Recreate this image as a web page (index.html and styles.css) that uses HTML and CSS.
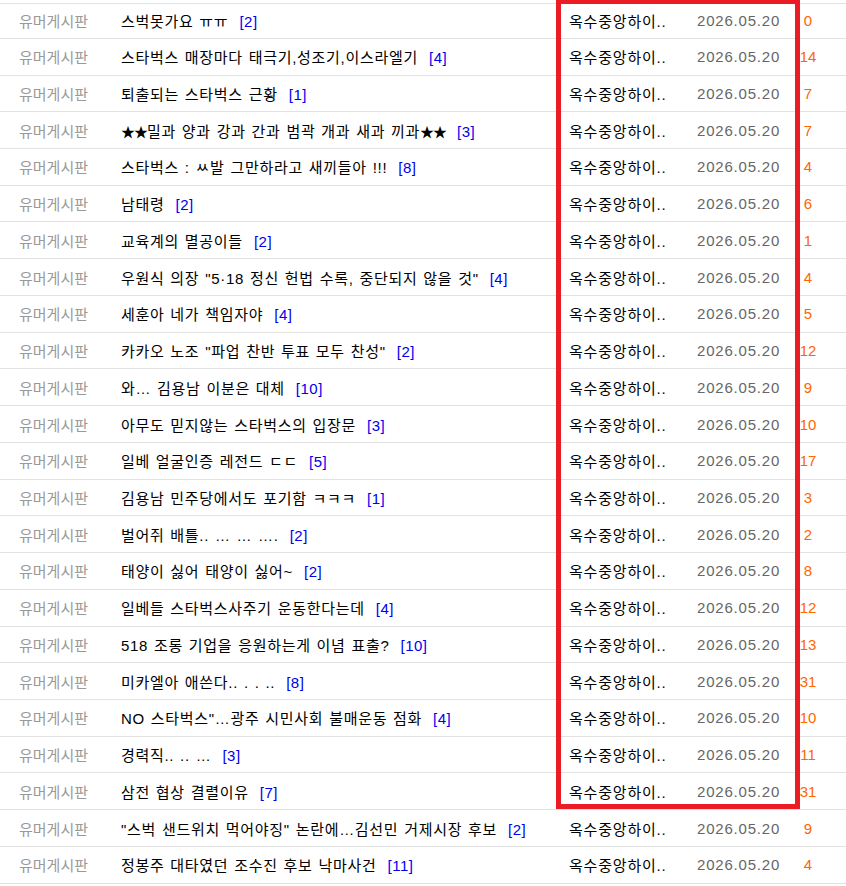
FILE: index.html
```html
<!DOCTYPE html>
<html lang="ko">
<head>
<meta charset="utf-8">
<title>유머게시판</title>
<link rel="stylesheet" href="styles.css">
</head>
<body>
<div class="board">
  <ul class="list">
    <li class="row"><span class="cat">유머게시판</span><span class="title">스벅못가요 ㅠㅠ<span class="cmt">[2]</span></span><span class="author">옥수중앙하이..</span><span class="date">2026.05.20</span><span class="hit">0</span></li>
    <li class="row"><span class="cat">유머게시판</span><span class="title">스타벅스 매장마다 태극기,성조기,이스라엘기<span class="cmt">[4]</span></span><span class="author">옥수중앙하이..</span><span class="date">2026.05.20</span><span class="hit">14</span></li>
    <li class="row"><span class="cat">유머게시판</span><span class="title">퇴출되는 스타벅스 근황<span class="cmt">[1]</span></span><span class="author">옥수중앙하이..</span><span class="date">2026.05.20</span><span class="hit">7</span></li>
    <li class="row"><span class="cat">유머게시판</span><span class="title"><span class="star">★★</span>밀과 양과 강과 간과 범곽 개과 새과 끼과<span class="star">★★</span><span class="cmt">[3]</span></span><span class="author">옥수중앙하이..</span><span class="date">2026.05.20</span><span class="hit">7</span></li>
    <li class="row"><span class="cat">유머게시판</span><span class="title">스타벅스 : ㅆ발 그만하라고 새끼들아 !!!<span class="cmt">[8]</span></span><span class="author">옥수중앙하이..</span><span class="date">2026.05.20</span><span class="hit">4</span></li>
    <li class="row"><span class="cat">유머게시판</span><span class="title">남태령<span class="cmt">[2]</span></span><span class="author">옥수중앙하이..</span><span class="date">2026.05.20</span><span class="hit">6</span></li>
    <li class="row"><span class="cat">유머게시판</span><span class="title">교육계의 멸공이들<span class="cmt">[2]</span></span><span class="author">옥수중앙하이..</span><span class="date">2026.05.20</span><span class="hit">1</span></li>
    <li class="row"><span class="cat">유머게시판</span><span class="title">우원식 의장 "5·18 정신 헌법 수록, 중단되지 않을 것"<span class="cmt">[4]</span></span><span class="author">옥수중앙하이..</span><span class="date">2026.05.20</span><span class="hit">4</span></li>
    <li class="row"><span class="cat">유머게시판</span><span class="title">세훈아 네가 책임자야<span class="cmt">[4]</span></span><span class="author">옥수중앙하이..</span><span class="date">2026.05.20</span><span class="hit">5</span></li>
    <li class="row"><span class="cat">유머게시판</span><span class="title">카카오 노조 "파업 찬반 투표 모두 찬성"<span class="cmt">[2]</span></span><span class="author">옥수중앙하이..</span><span class="date">2026.05.20</span><span class="hit">12</span></li>
    <li class="row"><span class="cat">유머게시판</span><span class="title">와… 김용남 이분은 대체<span class="cmt">[10]</span></span><span class="author">옥수중앙하이..</span><span class="date">2026.05.20</span><span class="hit">9</span></li>
    <li class="row"><span class="cat">유머게시판</span><span class="title">아무도 믿지않는 스타벅스의 입장문<span class="cmt">[3]</span></span><span class="author">옥수중앙하이..</span><span class="date">2026.05.20</span><span class="hit">10</span></li>
    <li class="row"><span class="cat">유머게시판</span><span class="title">일베 얼굴인증 레전드 ㄷㄷ<span class="cmt">[5]</span></span><span class="author">옥수중앙하이..</span><span class="date">2026.05.20</span><span class="hit">17</span></li>
    <li class="row"><span class="cat">유머게시판</span><span class="title">김용남 민주당에서도 포기함 ㅋㅋㅋ<span class="cmt">[1]</span></span><span class="author">옥수중앙하이..</span><span class="date">2026.05.20</span><span class="hit">3</span></li>
    <li class="row"><span class="cat">유머게시판</span><span class="title">벌어쥐 배틀.. … … ….<span class="cmt">[2]</span></span><span class="author">옥수중앙하이..</span><span class="date">2026.05.20</span><span class="hit">2</span></li>
    <li class="row"><span class="cat">유머게시판</span><span class="title">태양이 싫어 태양이 싫어~<span class="cmt">[2]</span></span><span class="author">옥수중앙하이..</span><span class="date">2026.05.20</span><span class="hit">8</span></li>
    <li class="row"><span class="cat">유머게시판</span><span class="title">일베들 스타벅스사주기 운동한다는데<span class="cmt">[4]</span></span><span class="author">옥수중앙하이..</span><span class="date">2026.05.20</span><span class="hit">12</span></li>
    <li class="row"><span class="cat">유머게시판</span><span class="title">518 조롱 기업을 응원하는게 이념 표출?<span class="cmt">[10]</span></span><span class="author">옥수중앙하이..</span><span class="date">2026.05.20</span><span class="hit">13</span></li>
    <li class="row"><span class="cat">유머게시판</span><span class="title">미카엘아 애쓴다.. . . ..<span class="cmt">[8]</span></span><span class="author">옥수중앙하이..</span><span class="date">2026.05.20</span><span class="hit">31</span></li>
    <li class="row"><span class="cat">유머게시판</span><span class="title">NO 스타벅스"…광주 시민사회 불매운동 점화<span class="cmt">[4]</span></span><span class="author">옥수중앙하이..</span><span class="date">2026.05.20</span><span class="hit">10</span></li>
    <li class="row"><span class="cat">유머게시판</span><span class="title">경력직.. .. …<span class="cmt">[3]</span></span><span class="author">옥수중앙하이..</span><span class="date">2026.05.20</span><span class="hit">11</span></li>
    <li class="row"><span class="cat">유머게시판</span><span class="title">삼전 협상 결렬이유<span class="cmt">[7]</span></span><span class="author">옥수중앙하이..</span><span class="date">2026.05.20</span><span class="hit">31</span></li>
    <li class="row"><span class="cat">유머게시판</span><span class="title">"스벅 샌드위치 먹어야징" 논란에…김선민 거제시장 후보<span class="cmt">[2]</span></span><span class="author">옥수중앙하이..</span><span class="date">2026.05.20</span><span class="hit">9</span></li>
    <li class="row"><span class="cat">유머게시판</span><span class="title">정봉주 대타였던 조수진 후보 낙마사건<span class="cmt">[11]</span></span><span class="author">옥수중앙하이..</span><span class="date">2026.05.20</span><span class="hit">4</span></li>
  </ul>
  <div class="highlight"></div>
</div>
</body>
</html>
```

FILE: styles.css
```css
* { box-sizing: border-box; }
html, body { margin: 0; padding: 0; background: #fff; }
body {
  font-family: "Liberation Sans", "Noto Sans CJK KR", sans-serif;
  font-size: 15px;
  color: #000;
}
.board {
  position: relative;
  width: 846px;
  padding-top: 3px;
}
.list {
  list-style: none;
  margin: 0;
  padding: 0;
  border-top: 1px solid #e2e2e2;
}
.row {
  display: grid;
  grid-template-columns: 121px 448px 128px 93px 36px 20px;
  align-items: center;
  height: 36.74px;
  border-bottom: 1px solid #e2e2e2;
  white-space: nowrap;
}
.row:first-child { height: 34.8px; }
.cat {
  padding-left: 19px;
  color: #999;
}
.title {
  color: #000;
  overflow: hidden;
  letter-spacing: 0.7px;
  word-spacing: 1px;
}
.star {
  letter-spacing: -1px;
  font-size: 14px;
}
.cmt {
  color: #0000f0;
  margin-left: 11px;
  letter-spacing: 0.5px;
}
.author {
  color: #000;
  letter-spacing: 0.8px;
}
.date {
  color: #666;
  letter-spacing: 0.8px;
}
.hit {
  color: #ff6600;
  text-align: center;
}
.highlight {
  position: absolute;
  left: 556px;
  top: -1px;
  width: 244px;
  height: 810px;
  border: 5px solid #ec1c24;
  pointer-events: none;
}
```
